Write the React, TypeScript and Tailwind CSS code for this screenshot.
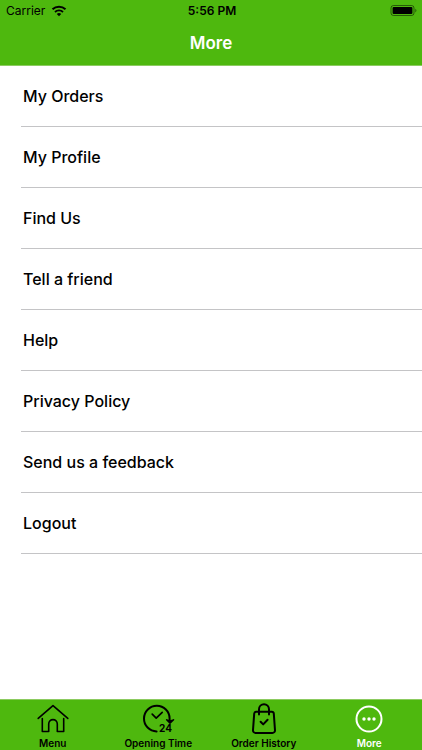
import React, { useState } from "react";

const items = [
  "My Orders",
  "My Profile",
  "Find Us",
  "Tell a friend",
  "Help",
  "Privacy Policy",
  "Send us a feedback",
  "Logout",
];

function WifiIcon() {
  return (
    <svg className="h-3 w-4" viewBox="0 0 16 12" fill="none" stroke="black" aria-hidden="true">
      <path d="M1.5 4.3a9.4 9.4 0 0 1 13 0" strokeWidth="2" />
      <path d="M4 7a5.7 5.7 0 0 1 8 0" strokeWidth="1.8" />
      <path d="M8 11.2 5.8 9a3.1 3.1 0 0 1 4.4 0z" fill="black" stroke="none" />
    </svg>
  );
}

function BatteryIcon() {
  return (
    <svg className="h-3 w-7" viewBox="0 0 28 12" aria-hidden="true">
      <rect x="1" y="0.5" width="23" height="10" rx="2.5" fill="none" stroke="black" strokeOpacity="0.5" />
      <rect x="2.6" y="2" width="19.8" height="7" rx="1" fill="black" />
      <path d="M25.3 3.8c1.5.6 1.5 3 0 3.6z" fillOpacity="0.5" />
    </svg>
  );
}

function HomeIcon() {
  return (
    <>
      <path d="M1.2 15.4 16 2.6l14.8 12.8" />
      <path d="M5.3 15.6v12.9h6.4v-7.6a4.3 4.3 0 0 1 8.6 0v7.6h6.4V15.6" />
    </>
  );
}

function ClockIcon() {
  return (
    <>
      <path d="M14.6 28.4A12.8 12.8 0 1 1 27.6 15.6v2.6" />
      <path d="m24.6 16.8 3.4 3.4 3.6-3.4-3.4 1z" fill="currentColor" strokeWidth="1.4" />
      <path d="m10.2 11.2 4 4 6-5.8" strokeWidth="1.7" />
      <text x="17" y="29" fontSize="10" fontWeight="700" fill="currentColor" stroke="none">
        24
      </text>
    </>
  );
}

function BagIcon() {
  return (
    <>
      <path d="M8.2 8.8h15.6a2 2 0 0 1 2 1.8l1.2 16.6a2.6 2.6 0 0 1-2.6 2.8H7.6A2.6 2.6 0 0 1 5 27.2l1.2-16.6a2 2 0 0 1 2-1.8z" />
      <path d="M11 11.6V6.2a5 5 0 0 1 10 0v5.4" />
      <path d="m12.6 18.8 2.6 2.6 4.4-4.6" />
    </>
  );
}

function MoreIcon() {
  return (
    <>
      <circle cx="16" cy="16" r="12.5" />
      <g fill="currentColor" stroke="none">
        <circle cx="11" cy="16" r="1.7" />
        <circle cx="16" cy="16" r="1.7" />
        <circle cx="21" cy="16" r="1.7" />
      </g>
    </>
  );
}

const tabs = [
  { label: "Menu", icon: <HomeIcon />, stroke: 1.6 },
  { label: "Opening Time", icon: <ClockIcon />, stroke: 2 },
  { label: "Order History", icon: <BagIcon />, stroke: 2 },
  { label: "More", icon: <MoreIcon />, stroke: 2 },
];

export default function App() {
  const [active, setActive] = useState("More");
  return (
    <div className="flex min-h-screen flex-col bg-white font-['Inter',sans-serif] text-black">
      <header className="border-b border-[#8ccb60] bg-[#4eb80e]">
        <div className="grid h-[22px] grid-cols-3 items-center pr-1 pl-1.5 text-xs">
          <div className="flex items-center gap-1.5">
            <span>Carrier</span>
            <WifiIcon />
          </div>
          <div className="text-center font-semibold">5:56 PM</div>
          <div className="flex justify-end">
            <BatteryIcon />
          </div>
        </div>
        <h1 className="h-[43px] text-center text-[17px] leading-[43px] font-semibold text-white">More</h1>
      </header>
      <main className="flex-1">
        <ul className="pl-[21px]">
          {items.map((item) => (
            <li key={item} className="border-b border-[#c4c4c6]">
              <button type="button" className="h-[60px] w-full pl-0.5 text-left text-base font-medium">
                {item}
              </button>
            </li>
          ))}
        </ul>
      </main>
      <nav className="grid grid-cols-4 border-t border-[#8ccb60] bg-[#4eb80e]">
        {tabs.map((tab) => (
          <button
            key={tab.label}
            type="button"
            onClick={() => setActive(tab.label)}
            className={
              "flex h-[50px] flex-col items-center pt-[3px] text-[10px] leading-4 font-semibold " +
              (active === tab.label ? "text-white" : "text-black")
            }
          >
            <svg
              className="h-8 w-8 overflow-visible"
              viewBox="0 0 32 32"
              fill="none"
              stroke="currentColor"
              strokeWidth={tab.stroke}
              strokeLinecap="round"
              strokeLinejoin="round"
              aria-hidden="true"
            >
              {tab.icon}
            </svg>
            {tab.label}
          </button>
        ))}
      </nav>
    </div>
  );
}
